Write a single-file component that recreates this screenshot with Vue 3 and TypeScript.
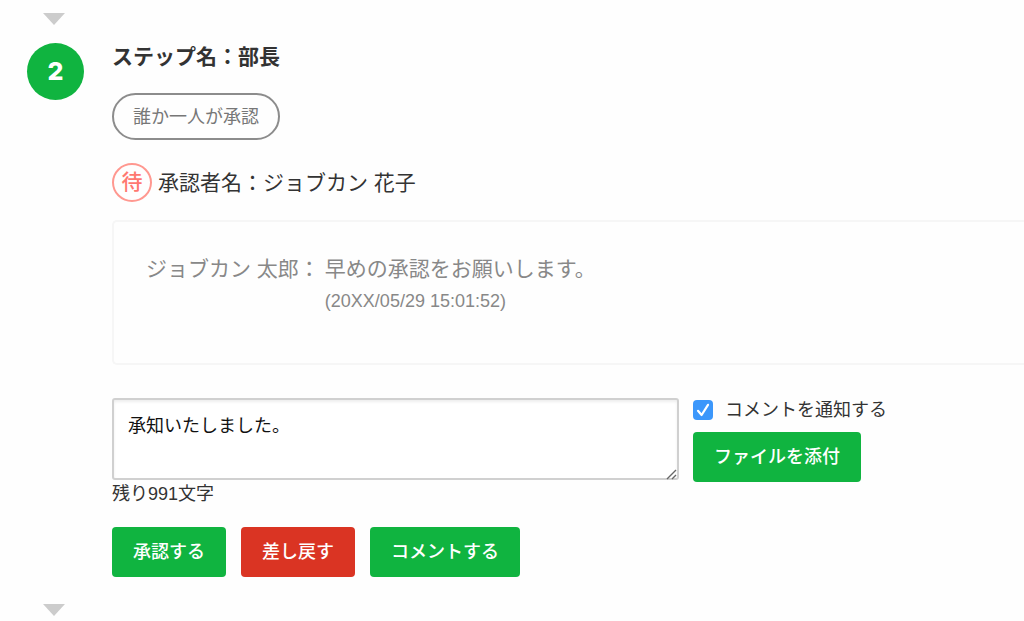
<script setup lang="ts">
import { ref } from 'vue'

const comment = ref('承知いたしました。')
const notify = ref(true)
const remaining = 991
</script>

<template>
  <main class="flow">
    <div class="arrow-row">
      <svg class="arrow" viewBox="0 0 22 12" aria-hidden="true"><path d="M0 0H22L11 12Z" /></svg>
    </div>
    <section class="step">
      <div class="rail"><span class="number">2</span></div>
      <div class="content">
        <h2 class="title">ステップ名：部長</h2>
        <span class="rule">誰か一人が承認</span>
        <p class="approver"><span class="status">待</span>承認者名：ジョブカン 花子</p>
        <div class="history">
          <span>ジョブカン 太郎：</span>
          <div>
            <p class="message">早めの承認をお願いします。</p>
            <time class="date">(20XX/05/29 15:01:52)</time>
          </div>
        </div>
        <form class="form" @submit.prevent>
          <div class="entry">
            <div class="comment-box">
              <textarea v-model="comment" class="comment" aria-label="コメント"></textarea>
              <svg class="grip" viewBox="0 0 12 12" aria-hidden="true"><path d="M1 10L10 1M6 10L10 6" /></svg>
            </div>
            <div class="side">
              <label class="notify" for="notify">
                <span class="tick">
                  <input id="notify" v-model="notify" type="checkbox" />
                  <svg v-if="notify" viewBox="0 0 20 20" aria-hidden="true"><path d="M5 10.8L8.6 15L15 4.8" /></svg>
                </span>
                コメントを通知する
              </label>
              <button type="button" class="button">ファイルを添付</button>
            </div>
          </div>
          <p class="count">残り{{ remaining }}文字</p>
          <div class="actions">
            <button type="submit" class="button">承認する</button>
            <button type="button" class="button danger">差し戻す</button>
            <button type="button" class="button">コメントする</button>
          </div>
        </form>
      </div>
    </section>
    <div class="arrow-row">
      <svg class="arrow" viewBox="0 0 22 12" aria-hidden="true"><path d="M0 0H22L11 12Z" /></svg>
    </div>
  </main>
</template>

<style>
body {
  margin: 0;
  background: #fefefe;
}
</style>

<style scoped>
.flow {
  padding: 13px 0 4px;
  color: #333;
  font-family: "Liberation Sans", "Noto Sans CJK JP", sans-serif;
  font-size: 18px;
  line-height: 24px;
}
.arrow-row {
  display: flex;
  padding-left: 43px;
}
.arrow {
  width: 22px;
  height: 12px;
  fill: #ccc;
}
.step {
  display: grid;
  grid-template-columns: 84px minmax(0, 1fr);
  column-gap: 28px;
  padding: 18px 0 27px;
}
.rail {
  display: flex;
  justify-content: flex-end;
  align-items: flex-start;
}
.number {
  width: 57px;
  height: 57px;
  border-radius: 50%;
  background: #10b440;
  color: #fff;
  font-family: Inter, "Liberation Sans", sans-serif;
  font-size: 25px;
  font-weight: 800;
  line-height: 57px;
  text-align: center;
}
.content {
  display: flex;
  flex-direction: column;
  align-items: flex-start;
}
.title {
  margin: 0 0 22px;
  font-size: 21px;
  line-height: 28px;
}
.rule {
  box-sizing: border-box;
  padding: 11px 19px 9px;
  border: 2px solid #8c8c8c;
  border-radius: 24px;
  color: #777;
  line-height: 23px;
}
.approver {
  display: flex;
  align-items: center;
  gap: 6px;
  margin: 23px 0 18px;
  font-size: 21px;
}
.status {
  box-sizing: border-box;
  width: 40px;
  height: 39px;
  border: 2px solid #ff9890;
  border-radius: 50%;
  color: #ff7870;
  font-weight: 500;
  line-height: 33px;
  text-align: center;
}
.history {
  display: flex;
  gap: 5px;
  align-self: stretch;
  box-sizing: border-box;
  min-height: 145px;
  padding: 33px 32px;
  border: 2px solid #f6f6f6;
  border-right: 0;
  border-radius: 5px 0 0 5px;
  color: #888;
  font-size: 21px;
  line-height: 28px;
}
.message {
  margin: 0 0 4px;
}
.date {
  display: block;
  font-size: 18px;
  line-height: 28px;
}
.form {
  align-self: stretch;
  margin-top: 33px;
}
.entry {
  display: grid;
  grid-template-columns: 567fr 331fr;
  gap: 14px;
}
.comment-box {
  display: flex;
  position: relative;
}
.comment {
  box-sizing: border-box;
  width: 100%;
  height: 82px;
  padding: 14px;
  border: 2px solid #d0d0d0;
  border-radius: 3px;
  background: #fff;
  box-shadow: inset 0 2px 3px #eee;
  color: #111;
  font: inherit;
}
.comment::-webkit-resizer {
  background: transparent;
}
.grip {
  position: absolute;
  right: 1px;
  bottom: 1px;
  width: 12px;
  height: 12px;
  fill: none;
  stroke: #666;
  stroke-width: 1.4;
  pointer-events: none;
}
.side {
  display: flex;
  flex-direction: column;
  align-items: flex-start;
  gap: 10px;
}
.notify {
  display: flex;
  align-items: center;
  gap: 12px;
}
.tick {
  position: relative;
  width: 20px;
  height: 20px;
}
.tick input {
  display: block;
  width: 20px;
  height: 20px;
  margin: 0;
  border-radius: 4px;
  appearance: none;
  border: 1px solid #bbb;
}
.tick input:checked {
  border: 0;
  background: #3b97fb;
}
.tick svg {
  position: absolute;
  inset: 0;
  fill: none;
  stroke: #fff;
  stroke-width: 2.2;
  stroke-linecap: round;
  stroke-linejoin: round;
  pointer-events: none;
}
.button {
  padding: 13px 21px;
  border: 0;
  border-radius: 4px;
  background: #10b440;
  color: #fff;
  font: inherit;
  font-weight: 500;
}
.danger {
  background: #da3423;
}
.count {
  margin: 0 0 21px;
}
.actions {
  display: flex;
  gap: 15px;
}
</style>
